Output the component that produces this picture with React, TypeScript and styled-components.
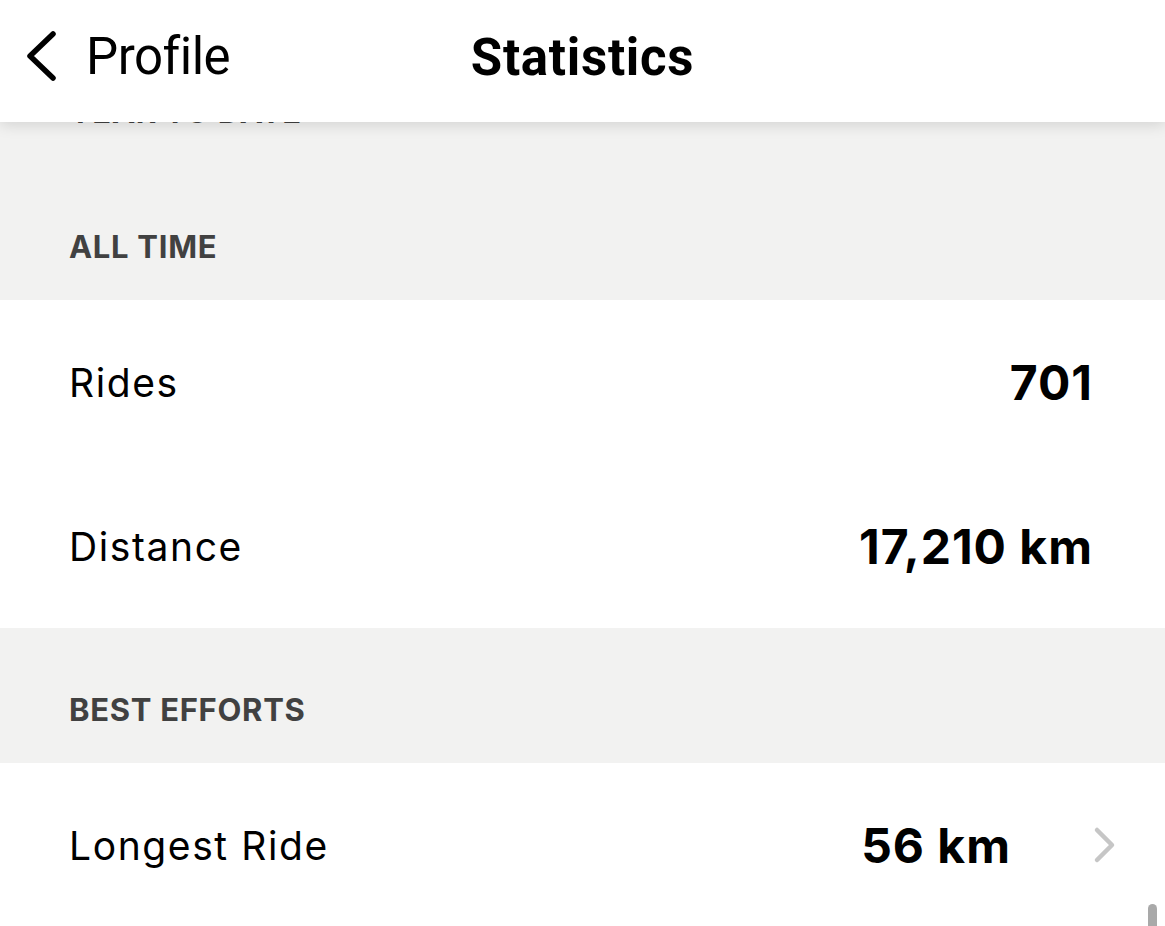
import React from 'react'
import styled, { createGlobalStyle } from 'styled-components'

const GlobalStyle = createGlobalStyle`
  html, body {
    margin: 0;
    padding: 0;
    background: #fff;
  }
  body {
    font-family: Inter, 'Noto Sans', sans-serif;
    -webkit-font-smoothing: antialiased;
  }
`

type Stat = { label: string; value: string; link?: boolean }
type Section = { title: string; stats: Stat[] }

const sections: Section[] = [
  { title: 'Year to date', stats: [] },
  {
    title: 'All time',
    stats: [
      { label: 'Rides', value: '701' },
      { label: 'Distance', value: '17,210 km' },
    ],
  },
  {
    title: 'Best efforts',
    stats: [{ label: 'Longest Ride', value: '56 km', link: true }],
  },
]

const BackIcon = () => (
  <svg width='40' height='60' viewBox='0 0 40 60' fill='none'>
    <path
      d='M33 8 L10 30 L33 52'
      stroke='#000'
      strokeWidth='5.5'
      strokeLinecap='round'
      strokeLinejoin='round'
    />
  </svg>
)

const ChevronIcon = () => (
  <svg width='24' height='40' viewBox='0 0 24 40' fill='none'>
    <path
      d='M4 5 L19 20 L4 35'
      stroke='#c6c6c6'
      strokeWidth='4.5'
      strokeLinecap='round'
      strokeLinejoin='round'
    />
  </svg>
)

const Statistics = () => {
  return (
    <Screen>
      <GlobalStyle />
      <NavBar>
        <BackButton>
          <BackIcon />
          <span>Profile</span>
        </BackButton>
        <Title>Statistics</Title>
      </NavBar>

      <Content>
        {sections.map(({ title, stats }) => (
          <React.Fragment key={title}>
            <SectionHeader>
              <SectionLabel>{title}</SectionLabel>
            </SectionHeader>
            {stats.map(({ label, value, link }) => (
              <Row key={label} $link={link}>
                <RowLabel>{label}</RowLabel>
                <RowValue $link={link}>
                  {value}
                  {link && <ChevronIcon />}
                </RowValue>
              </Row>
            ))}
          </React.Fragment>
        ))}
      </Content>

      <ScrollThumb />
    </Screen>
  )
}

const Screen = styled.div`
  position: relative;
  width: 1165px;
  height: 926px;
  overflow: hidden;
  background: #fff;
`

const NavBar = styled.header`
  position: absolute;
  top: 0;
  left: 0;
  right: 0;
  z-index: 2;
  height: 122px;
  display: flex;
  align-items: center;
  justify-content: center;
  background: #fff;
  box-shadow: 0 3px 14px rgba(0, 0, 0, 0.13);
`

const BackButton = styled.button`
  position: absolute;
  left: 20px;
  top: 26px;
  display: flex;
  align-items: center;
  gap: 26px;
  padding: 0;
  border: none;
  background: none;
  color: #000;
  font-family: Roboto, 'Liberation Sans', sans-serif;
  font-size: 51px;
  font-weight: 400;
  letter-spacing: -0.5px;
  cursor: pointer;
`

const Title = styled.h1`
  margin: 0;
  color: #000;
  font-family: Roboto, 'Liberation Sans', sans-serif;
  font-size: 51px;
  font-weight: 700;
  letter-spacing: 0.7px;
  transform: translateY(-4px);
`

const Content = styled.main`
  display: flex;
  flex-direction: column;
  padding-top: 30px;
  background: #f2f2f1;
`

const SectionHeader = styled.div`
  height: 135px;
  box-sizing: border-box;
  display: flex;
  align-items: flex-end;
  padding: 0 69px 36px;
  background: #f2f2f1;
`

const SectionLabel = styled.h2`
  margin: 0;
  color: #414141;
  font-size: 31px;
  line-height: 34px;
  font-weight: 700;
  text-transform: uppercase;
  letter-spacing: 0.7px;
`

const Row = styled.div<{ $link?: boolean }>`
  height: 164px;
  box-sizing: border-box;
  display: flex;
  align-items: center;
  justify-content: space-between;
  padding: 0 ${({ $link }) => ($link ? '48px' : '72px')} 0 69px;
  background: #fff;
`

const RowLabel = styled.span`
  color: #000;
  font-size: 39px;
  font-weight: 400;
  letter-spacing: 1.6px;
`

const RowValue = styled.span<{ $link?: boolean }>`
  display: flex;
  align-items: center;
  gap: ${({ $link }) => ($link ? '82px' : '0')};
  color: #000;
  font-size: 48px;
  font-weight: 700;
  letter-spacing: 1px;
`

const ScrollThumb = styled.div`
  position: absolute;
  right: 8px;
  bottom: -10px;
  width: 9px;
  height: 32px;
  border-radius: 5px;
  background: #a9a9a9;
`

export default Statistics
